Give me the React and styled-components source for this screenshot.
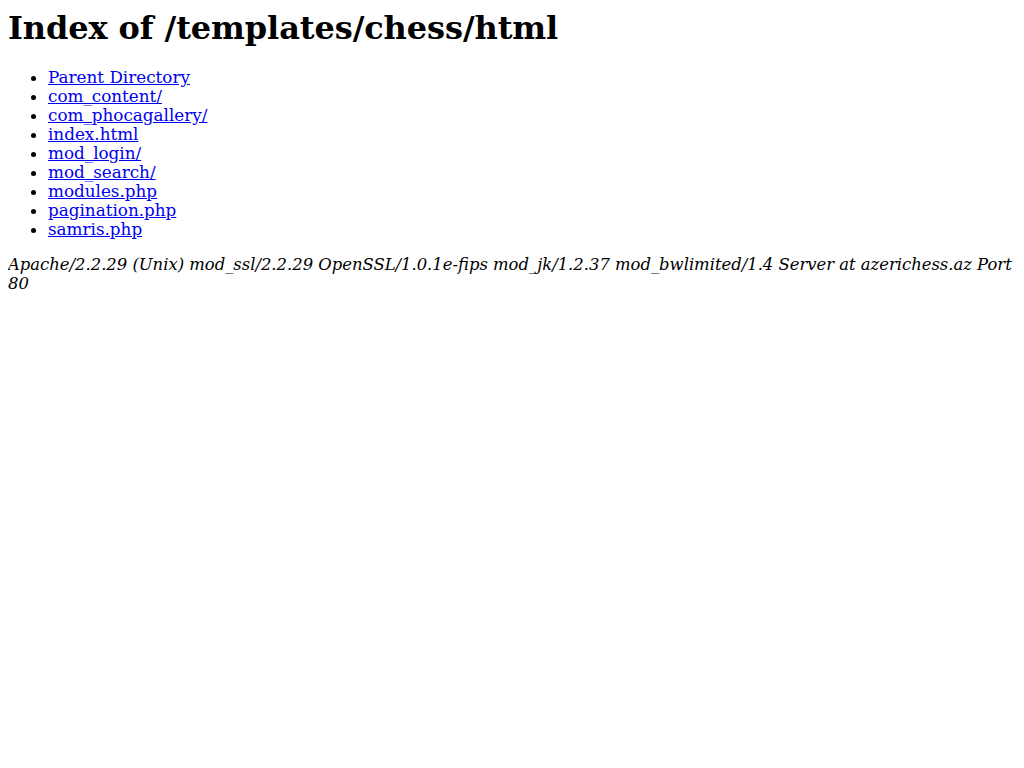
import React from 'react'
import styled, { createGlobalStyle } from 'styled-components'

const GlobalStyle = createGlobalStyle`
body {
  margin: 8px;
  background: #fff;
  color: #000;
  font-family: "DejaVu Serif", serif;
  font-size: 16.8px;
}
`

const Title = styled.h1`
font-size: 32px;
font-weight: bold;
margin: 1px 0 21px;
line-height: 38px;
letter-spacing: -0.1px;
`

const List = styled.ul`
margin: 0 0 16px;
padding-left: 40px;
line-height: 19px;
`

const Item = styled.li`
list-style: disc;
`

const Link = styled.a`
color: #0000ee;
text-decoration: underline;
`

const Address = styled.address`
font-style: italic;
font-size: 16.4px;
line-height: 19px;
`

const entries = [
  'Parent Directory',
  'com_content/',
  'com_phocagallery/',
  'index.html',
  'mod_login/',
  'mod_search/',
  'modules.php',
  'pagination.php',
  'samris.php',
]

const App = () => {
  return (
    <>
      <GlobalStyle />
      <Title>Index of /templates/chess/html</Title>
      <List>
        {entries.map((name) => (
          <Item key={name}>
            <Link href="#">{name}</Link>
          </Item>
        ))}
      </List>
      <Address>
        Apache/2.2.29 (Unix) mod_ssl/2.2.29 OpenSSL/1.0.1e-fips mod_jk/1.2.37 mod_bwlimited/1.4 Server at azerichess.az Port 80
      </Address>
    </>
  )
}

export default App
